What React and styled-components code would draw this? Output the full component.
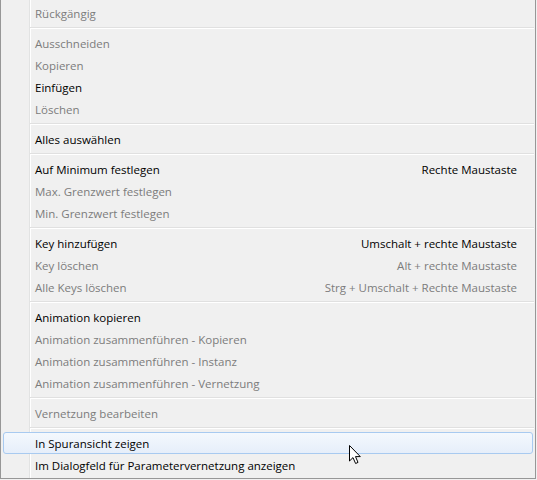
import React from 'react';
import styled, { createGlobalStyle } from 'styled-components';

const items = [
  { label: 'Rückgängig', disabled: true },
  'sep',
  { label: 'Ausschneiden', disabled: true },
  { label: 'Kopieren', disabled: true },
  { label: 'Einfügen' },
  { label: 'Löschen', disabled: true },
  'sep',
  { label: 'Alles auswählen' },
  'sep',
  { label: 'Auf Minimum festlegen', shortcut: 'Rechte Maustaste' },
  { label: 'Max. Grenzwert festlegen', disabled: true },
  { label: 'Min. Grenzwert festlegen', disabled: true },
  'sep',
  { label: 'Key hinzufügen', shortcut: 'Umschalt + rechte Maustaste' },
  { label: 'Key löschen', shortcut: 'Alt + rechte Maustaste', disabled: true },
  { label: 'Alle Keys löschen', shortcut: 'Strg + Umschalt + Rechte Maustaste', disabled: true },
  'sep',
  { label: 'Animation kopieren' },
  { label: 'Animation zusammenführen - Kopieren', disabled: true },
  { label: 'Animation zusammenführen - Instanz', disabled: true },
  { label: 'Animation zusammenführen - Vernetzung', disabled: true },
  'sep',
  { label: 'Vernetzung bearbeiten', disabled: true },
  'sep',
  { label: 'In Spuransicht zeigen', hover: true },
  { label: 'Im Dialogfeld für Parametervernetzung anzeigen' },
];

const App = () => {
  return (
    <>
      <GlobalStyle />
      <Menu>
        {items.map((item, i) =>
          item === 'sep' ? (
            <Separator key={i} />
          ) : (
            <Row key={i} $disabled={item.disabled} $hover={item.hover}>
              <Label>{item.label}</Label>
              {item.shortcut && <Shortcut>{item.shortcut}</Shortcut>}
            </Row>
          )
        )}
        <Cursor width="14" height="21" viewBox="0 0 14 21">
          <path
            d="M1.5 1.5 L1.5 17 L5 13.6 L7.6 19.5 L10 18.4 L7.5 12.6 L12.3 12.6 Z"
            fill="#fff"
            stroke="#000"
            strokeWidth="1"
            strokeLinejoin="miter"
          />
        </Cursor>
      </Menu>
    </>
  );
};

const GlobalStyle = createGlobalStyle`
  html, body {
    margin: 0;
    padding: 0;
    background: #f0f0f0;
  }
  body {
    font-family: 'Open Sans', 'Noto Sans', sans-serif;
    font-size: 11.5px;
  }
`;

const Menu = styled.div`
  position: relative;
  width: 536px;
  box-sizing: border-box;
  padding: 2px 0 2px;
  border: 1px solid #979797;
  border-top: none;
  background: linear-gradient(
    to right,
    #f0f0f0 28px,
    #e2e3e3 28px 29px,
    #ffffff 29px 30px,
    #f0f0f0 30px
  );
`;

const Separator = styled.div`
  height: 8px;
  margin: 0 1px 0 29px;
  display: flex;
  align-items: center;

  &::after {
    content: '';
    flex: 1;
    height: 1px;
    background: #e0e0e0;
    border-bottom: 1px solid #ffffff;
  }
`;

const Row = styled.div`
  height: 22px;
  box-sizing: border-box;
  margin: 0 2px;
  padding: 0 15px 0 31px;
  display: flex;
  align-items: center;
  justify-content: space-between;
  border: 1px solid ${({ $hover }) => ($hover ? '#a8caf0' : 'transparent')};
  border-radius: 3px;
  background: ${({ $hover }) =>
    $hover ? 'linear-gradient(to bottom, #f4f8fd, #e6eefa)' : 'transparent'};
  color: ${({ $disabled }) => ($disabled ? '#7c7c7c' : '#000')};
  white-space: nowrap;
`;

const Label = styled.span``;

const Shortcut = styled.span``;

const Cursor = styled.svg`
  position: absolute;
  left: 347px;
  top: 444px;
`;

export default App;
